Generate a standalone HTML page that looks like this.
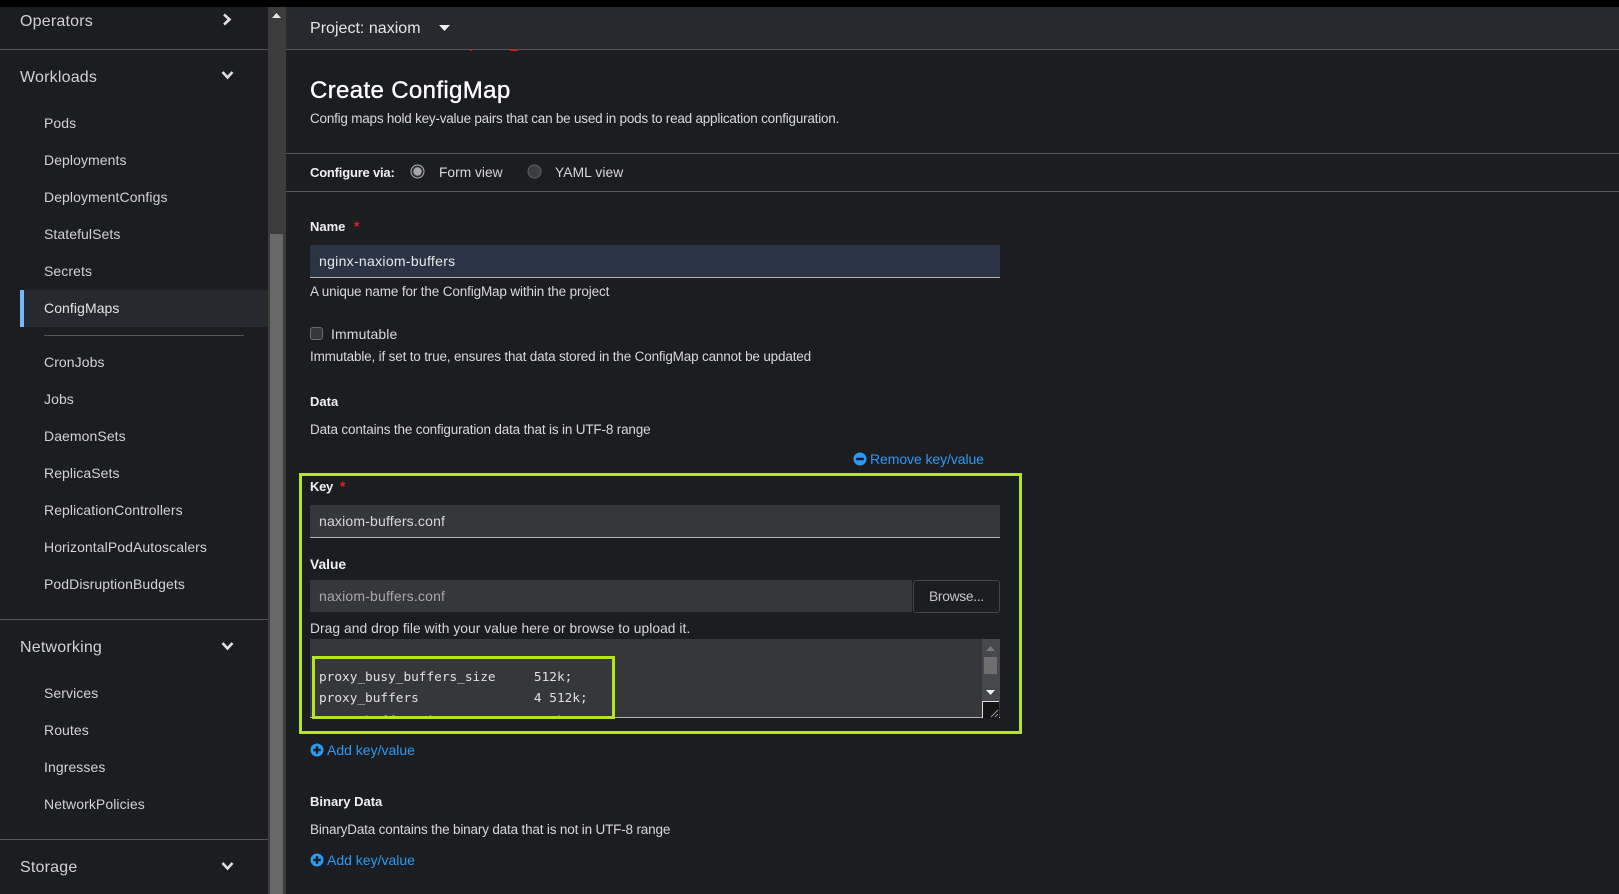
<!DOCTYPE html>
<html><head><meta charset="utf-8"><title>Create ConfigMap</title>
<style>
html,body{margin:0;padding:0;background:#1b1d21}
body{width:1619px;height:894px;overflow:hidden;position:relative;font-family:"Liberation Sans",sans-serif;color:#e0e0e0}
.t,.n,.h,.b,.l,.a{position:absolute;white-space:pre;line-height:20px;height:20px}
.t{font-size:13.5px;letter-spacing:-.17px;color:#d8d8d8}
.w{font-size:14px;letter-spacing:.12px}
.n{font-size:14px;left:44px;letter-spacing:.08px;color:#d2d2d2}
.h{font-size:16px;left:20px;letter-spacing:.2px;color:#d2d2d2}
.b{font-size:13px;font-weight:bold;color:#f0f0f0;left:310px}
.a{font-size:14px;color:#2b9af3;letter-spacing:0}
.r{position:absolute;background:#55575b}
.box{position:absolute}
.red{position:absolute;color:#e02020;font-size:14px;line-height:14px;font-weight:bold}
svg{position:absolute;overflow:visible}
</style></head><body>
<div class="box" style="left:0;top:0;width:1619px;height:7px;background:#000"></div>
<div class="box" style="left:268px;top:7px;width:18px;height:887px;background:#3c3c3c"></div>
<div class="box" style="left:270px;top:234px;width:13px;height:660px;background:#686868"></div>
<svg style="left:272px;top:13px" width="9" height="6"><path d="M0 5 4.5 0 9 5z" fill="#e8e8e8"/></svg>

<!-- sidebar -->
<span class="h" style="top:12px">Operators</span>
<svg style="left:222px;top:13px" width="10" height="13"><path d="M2 1.5 7.5 6.5 2 11.5" fill="none" stroke="#e0e0e0" stroke-width="2.6"/></svg>
<div class="r" style="left:0;top:49px;width:268px;height:1px"></div>
<span class="h" style="top:68px">Workloads</span>
<svg style="left:221px;top:70px" width="13" height="10"><path d="M1.5 2 6.5 7.5 11.5 2" fill="none" stroke="#e0e0e0" stroke-width="2.6"/></svg>
<span class="n" style="top:113px">Pods</span>
<span class="n" style="top:150px">Deployments</span>
<span class="n" style="top:187px">DeploymentConfigs</span>
<span class="n" style="top:224px">StatefulSets</span>
<span class="n" style="top:261px">Secrets</span>
<div class="box" style="left:20px;top:290px;width:248px;height:37px;background:#26292d"></div>
<div class="box" style="left:20px;top:290px;width:4px;height:37px;background:#73bcf7"></div>
<span class="n" style="top:298px;color:#e4e4e4">ConfigMaps</span>
<div class="r" style="left:44px;top:335px;width:200px;height:1px"></div>
<span class="n" style="top:352px">CronJobs</span>
<span class="n" style="top:389px">Jobs</span>
<span class="n" style="top:426px">DaemonSets</span>
<span class="n" style="top:463px">ReplicaSets</span>
<span class="n" style="top:500px">ReplicationControllers</span>
<span class="n" style="top:537px">HorizontalPodAutoscalers</span>
<span class="n" style="top:574px">PodDisruptionBudgets</span>
<div class="r" style="left:0;top:619px;width:268px;height:1px"></div>
<span class="h" style="top:638px">Networking</span>
<svg style="left:221px;top:641px" width="13" height="10"><path d="M1.5 2 6.5 7.5 11.5 2" fill="none" stroke="#e0e0e0" stroke-width="2.6"/></svg>
<span class="n" style="top:683px">Services</span>
<span class="n" style="top:720px">Routes</span>
<span class="n" style="top:757px">Ingresses</span>
<span class="n" style="top:794px">NetworkPolicies</span>
<div class="r" style="left:0;top:839px;width:268px;height:1px"></div>
<span class="h" style="top:858px">Storage</span>
<svg style="left:221px;top:861px" width="13" height="10"><path d="M1.5 2 6.5 7.5 11.5 2" fill="none" stroke="#e0e0e0" stroke-width="2.6"/></svg>

<!-- header -->
<div class="box" style="left:286px;top:7px;width:1333px;height:42px;background:#26292d"></div>
<div class="r" style="left:286px;top:49px;width:1333px;height:1px"></div>
<div class="box" style="left:470px;top:49px;width:2px;height:2px;background:#c81e1e"></div>
<div class="box" style="left:510px;top:49px;width:8px;height:2px;background:#c81e1e"></div>
<span class="t" style="left:310px;top:19px;font-size:16px;color:#e6e6e6;letter-spacing:.02px">Project: naxiom</span>
<svg style="left:439px;top:25px" width="11" height="6"><path d="M0 0H11L5.500 6z" fill="#f0f0f0"/></svg>

<!-- title -->
<span class="t" style="left:310px;top:78px;font-size:24px;line-height:26px;height:26px;color:#fff;letter-spacing:.36px;-webkit-text-stroke:.35px #fff">Create ConfigMap</span>
<span class="t" style="left:310px;top:109px;letter-spacing:-.22px">Config maps hold key-value pairs that can be used in pods to read application configuration.</span>
<div class="r" style="left:286px;top:153px;width:1333px;height:1px"></div>
<span class="b" style="top:163px;letter-spacing:-.2px">Configure via:</span>
<svg style="left:410px;top:164px" width="15" height="15"><circle cx="7.500" cy="7.500" r="6.500" fill="#2a2c30" stroke="#b0b0b0"/><circle cx="7.500" cy="7.500" r="4.200" fill="#a8a8a8"/></svg>
<span class="t" style="left:439px;top:163px;font-size:13.8px;letter-spacing:0">Form view</span>
<svg style="left:527px;top:164px" width="15" height="15"><circle cx="7.500" cy="7.500" r="6.500" fill="#3c3d40" stroke="#606060"/></svg>
<span class="t" style="left:555px;top:163px;font-size:13.8px;letter-spacing:.1px">YAML view</span>
<div class="r" style="left:286px;top:191px;width:1333px;height:1px"></div>

<!-- name -->
<span class="b" style="top:217px">Name</span>
<span class="red" style="left:354px;top:219px">*</span>
<div class="box" style="left:310px;top:245px;width:690px;height:33px;background:#2a3445;border-bottom:1px solid #b4b4b4;box-sizing:border-box"></div>
<span class="t w" style="left:319px;top:251px;color:#e8e8e8;letter-spacing:.3px">nginx-naxiom-buffers</span>
<span class="t" style="left:310px;top:282px;letter-spacing:-.14px">A unique name for the ConfigMap within the project</span>
<div class="box" style="left:310px;top:327px;width:13px;height:13px;background:#36373a;border:1px solid #6a6a6a;border-radius:3px;box-sizing:border-box"></div>
<span class="t w" style="left:331px;top:324px">Immutable</span>
<span class="t" style="left:310px;top:347px">Immutable, if set to true, ensures that data stored in the ConfigMap cannot be updated</span>

<!-- data -->
<span class="b" style="top:392px">Data</span>
<span class="t" style="left:310px;top:420px">Data contains the configuration data that is in UTF-8 range</span>
<svg style="left:853px;top:452px" width="14" height="14"><circle cx="7" cy="7" r="6.500" fill="#2b9af3"/><rect x="3.200" y="5.700" width="7.600" height="2.600" fill="#1b1d21"/></svg>
<span class="a" style="left:870px;top:449px;letter-spacing:-.08px">Remove key/value</span>

<span class="b" style="top:477px;letter-spacing:-.3px">Key</span>
<span class="red" style="left:340px;top:479px">*</span>
<div class="box" style="left:310px;top:505px;width:690px;height:33px;background:#36373b;border-bottom:1px solid #b4b4b4;box-sizing:border-box"></div>
<span class="t w" style="left:319px;top:511px;letter-spacing:.18px">naxiom-buffers.conf</span>
<span class="b" style="top:555px;font-size:13.8px">Value</span>
<div class="box" style="left:310px;top:580px;width:602px;height:32px;background:#36373b"></div>
<span class="t w" style="left:319px;top:586px;color:#a8a8a8;letter-spacing:.18px">naxiom-buffers.conf</span>
<div class="box" style="left:913px;top:580px;width:87px;height:33px;background:#1b1d21;border:1px solid #45474b;border-radius:3px;box-sizing:border-box"></div>
<span class="t" style="left:929px;top:587px;color:#c4c4c4;font-size:13.8px;letter-spacing:-.3px">Browse...</span>
<span class="t" style="left:310px;top:619px;font-size:13.8px;letter-spacing:.06px">Drag and drop file with your value here or browse to upload it.</span>

<!-- textarea -->
<div class="box" style="left:310px;top:639px;width:690px;height:78px;background:#36373b;overflow:hidden;font:12.75px/21px 'DejaVu Sans Mono',monospace;color:#e0e0e0;white-space:pre"><div style="position:absolute;left:9px;top:28px">proxy_busy_buffers_size     512k;
proxy_buffers               4 512k;</div><div style="position:absolute;left:9px;top:72px">proxy_buffer_size           256k;</div></div>
<div class="box" style="left:310px;top:717px;width:690px;height:1px;background:#b4b4b4"></div>
<div class="box" style="left:982px;top:639px;width:18px;height:62px;background:#47484b"></div>
<div class="box" style="left:984px;top:657px;width:13px;height:17px;background:#6e6e6e"></div>
<svg style="left:986px;top:646px" width="9" height="5"><path d="M0 5 4.500 0 9 5z" fill="#7a7a7a"/></svg>
<svg style="left:986px;top:690px" width="9" height="5"><path d="M0 0H9L4.500 5z" fill="#f0f0f0"/></svg>
<div class="box" style="left:982px;top:701px;width:17px;height:17px;background:#141414;border-top:1px solid #e0e0e0;border-left:1px solid #e0e0e0;box-sizing:border-box"></div>
<svg style="left:990px;top:709px" width="9" height="9"><path d="M1 8 8 1M5 8 8 5" stroke="#9a9a9a" stroke-width="1" fill="none"/></svg>

<!-- highlights -->
<div class="box" style="left:299px;top:473px;width:723px;height:261px;border:3px solid #b4e61d;box-sizing:border-box"></div>
<div class="box" style="left:312px;top:656px;width:303px;height:63px;border:3px solid #b4e61d;box-sizing:border-box"></div>

<svg style="left:310px;top:743px" width="14" height="14"><circle cx="7" cy="7" r="6.500" fill="#2b9af3"/><path d="M3.200 5.800H5.800V3.200H8.200V5.800H10.800V8.200H8.200V10.800H5.800V8.200H3.200z" fill="#1b1d21"/></svg>
<span class="a" style="left:327px;top:740px">Add key/value</span>
<span class="b" style="top:792px">Binary Data</span>
<span class="t" style="left:310px;top:820px">BinaryData contains the binary data that is not in UTF-8 range</span>
<svg style="left:310px;top:853px" width="14" height="14"><circle cx="7" cy="7" r="6.500" fill="#2b9af3"/><path d="M3.200 5.800H5.800V3.200H8.200V5.800H10.800V8.200H8.200V10.800H5.800V8.200H3.200z" fill="#1b1d21"/></svg>
<span class="a" style="left:327px;top:850px">Add key/value</span>
</body></html>
